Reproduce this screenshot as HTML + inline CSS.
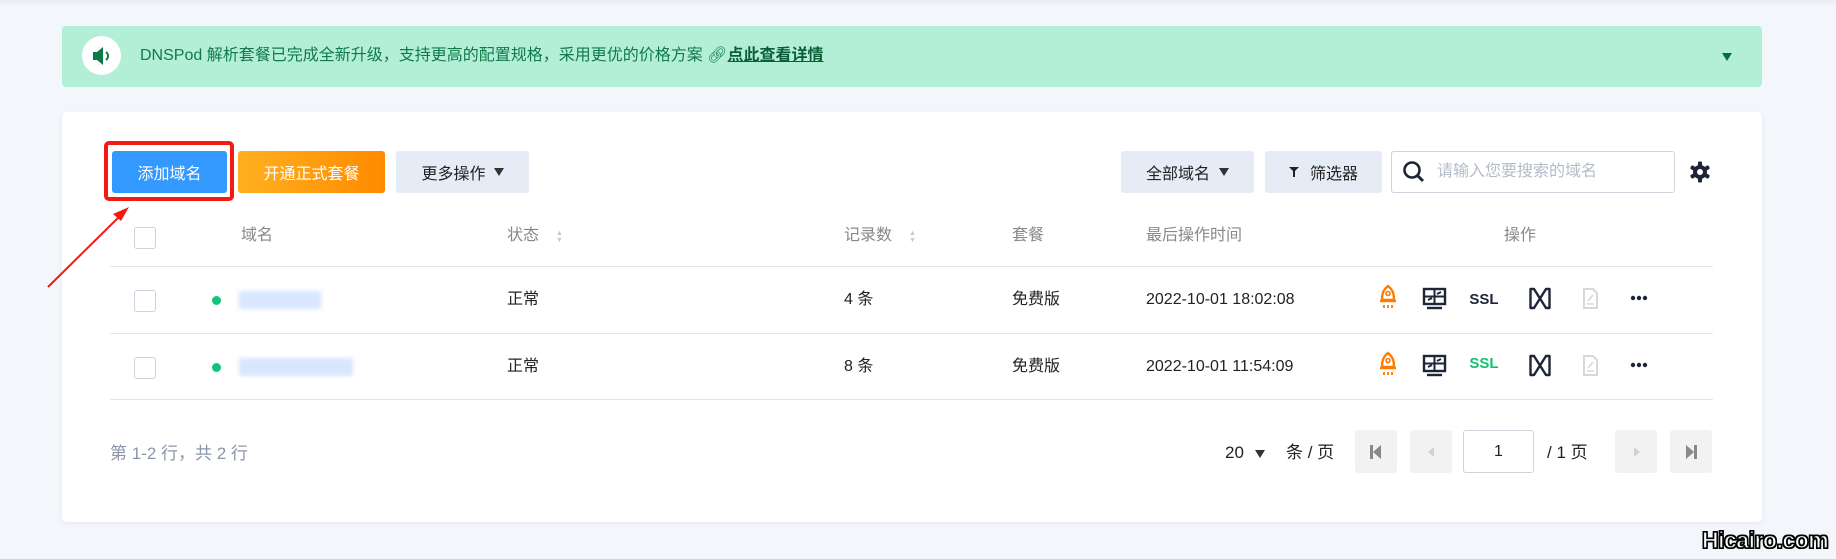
<!DOCTYPE html>
<html><head><meta charset="utf-8"><style>
*{box-sizing:border-box;margin:0;padding:0}
body{width:1836px;height:559px;background:#f3f6fa;font-family:"Liberation Sans","Noto Sans CJK SC",sans-serif;position:relative;overflow:hidden;color:#333}
.a{position:absolute}
.topbar{left:0;top:0;width:1836px;height:6px;background:linear-gradient(#e8ebf0,#f3f6fa)}
.banner{left:62px;top:26px;width:1700px;height:61px;background:#b3efd6;border-radius:4px}
.btn{position:absolute;top:151px;height:42px;border-radius:3px;font-size:16px;display:flex;align-items:center;justify-content:center}
.hd{top:224px;font-size:16px;color:#888;line-height:24px}
.cell{font-size:16px;color:#222;line-height:24px}
.line{left:110px;width:1603px;height:1px;background:#e5e5e5}
.cb{width:22px;height:22px;border:1px solid #ccd2dc;border-radius:3px;background:#fff}
.pg{top:430px;width:42px;height:43px;background:#f2f2f2;border-radius:3px}
.tri{width:0;height:0;border-left:5px solid transparent;border-right:5px solid transparent;border-top:8px solid #333}
</style></head><body>
<div class="a topbar"></div>
<div class="a banner"></div>
<div class="a" style="left:82px;top:36px;width:39px;height:39px;border-radius:50%;background:#fff"></div>
<svg class="a" style="left:89px;top:44px" width="24" height="24" viewBox="0 0 24 24"><path d="M4 8h4l6-5v18l-6-5H4z" fill="#0b7a47"/><path d="M17 8a5 5 0 0 1 0 8" stroke="#0b7a47" stroke-width="2" fill="none"/></svg>
<div class="a" style="left:140px;top:45px;font-size:16px;color:#117a48;line-height:22px;white-space:nowrap">DNSPod 解析套餐已完成全新升级，支持更高的配置规格，采用更优的价格方案 <span style="color:#117a48">🔗︎</span><b style="text-decoration:underline;color:#0b5f38">点此查看详情</b></div>
<div class="a tri" style="left:1722px;top:53px;border-top-color:#0b6b3f"></div>

<div class="a" style="left:62px;top:112px;width:1700px;height:410px;background:#fff;border-radius:5px;box-shadow:0 2px 6px rgba(0,0,0,.05)"></div>

<div class="a" style="left:104px;top:141px;width:130px;height:60px;border:4px solid #f21a12;border-radius:5px"></div>
<div class="btn" style="left:112px;width:115px;background:#3399ff;color:#fff">添加域名</div>
<div class="btn" style="left:238px;width:147px;background:linear-gradient(90deg,#ffb01f,#ff8a00);color:#fff">开通正式套餐</div>
<div class="btn" style="left:396px;width:133px;background:#e6ecf6;color:#222">更多操作<span class="tri" style="margin-left:8px;display:inline-block"></span></div>
<svg class="a" style="left:0;top:0" width="300" height="300"><line x1="48" y1="287" x2="124" y2="212" stroke="#f21a12" stroke-width="2"/><path d="M129 207 L113 214 L121 221 Z" fill="#f21a12"/></svg>

<div class="btn" style="left:1121px;width:133px;background:#e6ecf6;color:#222">全部域名<span class="tri" style="margin-left:9px;display:inline-block"></span></div>
<div class="btn" style="left:1265px;width:117px;background:#e6ecf6;color:#222"><svg width="10" height="12" style="margin-right:11px"><path d="M0 1h10L6 5v6H4V5z" fill="#222"/></svg>筛选器</div>
<div class="a" style="left:1391px;top:151px;width:284px;height:42px;border:1px solid #cfd5de;border-radius:3px"></div>
<svg class="a" style="left:1402px;top:160px" width="24" height="24" viewBox="0 0 24 24"><circle cx="10" cy="10" r="7.5" stroke="#1e2538" stroke-width="2.6" fill="none"/><line x1="15" y1="15" x2="21" y2="21" stroke="#1e2538" stroke-width="3"/></svg>
<div class="a" style="left:1437px;top:161px;font-size:16px;color:#b4bcc8;line-height:22px">请输入您要搜索的域名</div>
<svg class="a" style="left:1688px;top:160px" width="24" height="24" viewBox="0 0 24 24"><g fill="#1e2538"><circle cx="12" cy="12" r="7"/><rect x="10" y="1.5" width="4" height="21" rx="1"/><rect x="10" y="1.5" width="4" height="21" rx="1" transform="rotate(60 12 12)"/><rect x="10" y="1.5" width="4" height="21" rx="1" transform="rotate(120 12 12)"/></g><circle cx="12" cy="12" r="3" fill="#fff"/></svg>

<div class="a cb" style="left:134px;top:227px"></div>
<div class="a hd" style="left:241px">域名</div>
<div class="a hd" style="left:507px">状态</div>
<div class="a hd" style="left:844px">记录数</div>
<div class="a" style="left:556px;top:230px;font-size:7px;color:#c0c8d4;line-height:7px">▲<br>▼</div>
<div class="a" style="left:909px;top:230px;font-size:7px;color:#c0c8d4;line-height:7px">▲<br>▼</div>
<div class="a hd" style="left:1012px">套餐</div>
<div class="a hd" style="left:1146px">最后操作时间</div>
<div class="a hd" style="left:1504px">操作</div>
<div class="a line" style="top:266px"></div>

<div class="a cb" style="left:134px;top:290px"></div>
<div class="a" style="left:212px;top:296px;width:9px;height:9px;border-radius:50%;background:#0fc47b"></div>
<div class="a" style="left:239px;top:291px;width:82px;height:18px;background:#d8e6ff;filter:blur(2px)"></div>
<div class="a cell" style="left:507px;top:288px">正常</div>
<div class="a cell" style="left:844px;top:288px">4 条</div>
<div class="a cell" style="left:1012px;top:288px">免费版</div>
<div class="a cell" style="left:1146px;top:288px">2022-10-01 18:02:08</div>
<div class="a line" style="top:333px"></div>

<div class="a cb" style="left:134px;top:357px"></div>
<div class="a" style="left:212px;top:363px;width:9px;height:9px;border-radius:50%;background:#0fc47b"></div>
<div class="a" style="left:239px;top:358px;width:114px;height:18px;background:#d8e6ff;filter:blur(2px)"></div>
<div class="a cell" style="left:507px;top:355px">正常</div>
<div class="a cell" style="left:844px;top:355px">8 条</div>
<div class="a cell" style="left:1012px;top:355px">免费版</div>
<div class="a cell" style="left:1146px;top:355px">2022-10-01 11:54:09</div>
<div class="a line" style="top:399px"></div>

<svg class="a" style="left:1376px;top:284px" width="290" height="100">
<g id="r">
<path d="M12 2c-5 4-6 8-6 14h12c0-6-1-10-6-14z" fill="none" stroke="#ff7a00" stroke-width="2.4"/><circle cx="12" cy="9.5" r="2" fill="none" stroke="#ff7a00" stroke-width="1.6"/><line x1="4" y1="17" x2="20" y2="17" stroke="#ff7a00" stroke-width="2.4"/><path d="M8 21v3M12 21v3M16 21v3" stroke="#ff7a00" stroke-width="1.8"/>
<rect x="48" y="5" width="21" height="15" fill="none" stroke="#1e2538" stroke-width="2.4"/><path d="M48 12.5h21M58.5 5v15M52 16l4-2M61 10l4 -2" stroke="#1e2538" stroke-width="2"/><line x1="51" y1="24" x2="66" y2="24" stroke="#1e2538" stroke-width="2.4"/>
<text x="108" y="20" font-family="Liberation Sans" font-weight="bold" font-size="15" text-anchor="middle" fill="#1e2538">SSL</text>
<path d="M158 5h-3.5v19h3.5L170 5h3.5v19H170z" fill="none" stroke="#1e2538" stroke-width="2.4" stroke-linejoin="round"/>
<path d="M208 5h9l4 4v15h-13z" fill="none" stroke="#d8d8d8" stroke-width="2"/><path d="M211 20h7M212 17l5-6" stroke="#d8d8d8" stroke-width="1.6"/>
<circle cx="257" cy="14" r="2.2" fill="#1e2538"/><circle cx="263" cy="14" r="2.2" fill="#1e2538"/><circle cx="269" cy="14" r="2.2" fill="#1e2538"/>
</g>
<use href="#r" y="67"/>
</svg>
<div class="a" style="left:1466px;top:351px;width:36px;height:28px;background:#fff"></div>
<div class="a" style="left:1484px;top:355px;font-weight:bold;font-size:15px;line-height:17px;color:#12c072;transform:translateX(-50%)">SSL</div>

<div class="a" style="left:110px;top:442px;font-size:17px;color:#8a96a8;line-height:24px">第 1-2 行，共 2 行</div>
<div class="a" style="left:1225px;top:441px;font-size:17px;color:#222;line-height:24px">20</div>
<div class="a tri" style="left:1255px;top:450px"></div>
<div class="a" style="left:1286px;top:441px;font-size:17px;color:#222;line-height:24px">条 / 页</div>
<div class="a pg" style="left:1355px"></div>
<div class="a" style="left:1370px;top:445px;width:3px;height:14px;background:#888"></div><div class="a" style="left:1373px;top:445px;width:0;height:0;border-top:7px solid transparent;border-bottom:7px solid transparent;border-right:8px solid #888"></div>
<div class="a pg" style="left:1410px"></div>
<div class="a" style="left:1428px;top:447px;width:0;height:0;border-top:5px solid transparent;border-bottom:5px solid transparent;border-right:6px solid #ccd2dc"></div>
<div class="a" style="left:1463px;top:430px;width:71px;height:43px;border:1px solid #cfd5de;border-radius:3px;font-size:16px;text-align:center;line-height:41px;color:#222">1</div>
<div class="a" style="left:1547px;top:441px;font-size:17px;color:#222;line-height:24px">/ 1 页</div>
<div class="a pg" style="left:1615px"></div>
<div class="a" style="left:1634px;top:447px;width:0;height:0;border-top:5px solid transparent;border-bottom:5px solid transparent;border-left:6px solid #ccd2dc"></div>
<div class="a pg" style="left:1670px"></div>
<div class="a" style="left:1686px;top:445px;width:0;height:0;border-top:7px solid transparent;border-bottom:7px solid transparent;border-left:8px solid #888"></div><div class="a" style="left:1694px;top:445px;width:3px;height:14px;background:#888"></div>

<div class="a" style="left:1702px;top:527px;font-size:23px;font-weight:bold;color:#fff;letter-spacing:-0.5px;-webkit-text-stroke:1.2px #000;text-shadow:1px 1px 0 #000,-1px -1px 0 #000,1px -1px 0 #000,-1px 1px 0 #000">Hicairo.com</div>
</body></html>
